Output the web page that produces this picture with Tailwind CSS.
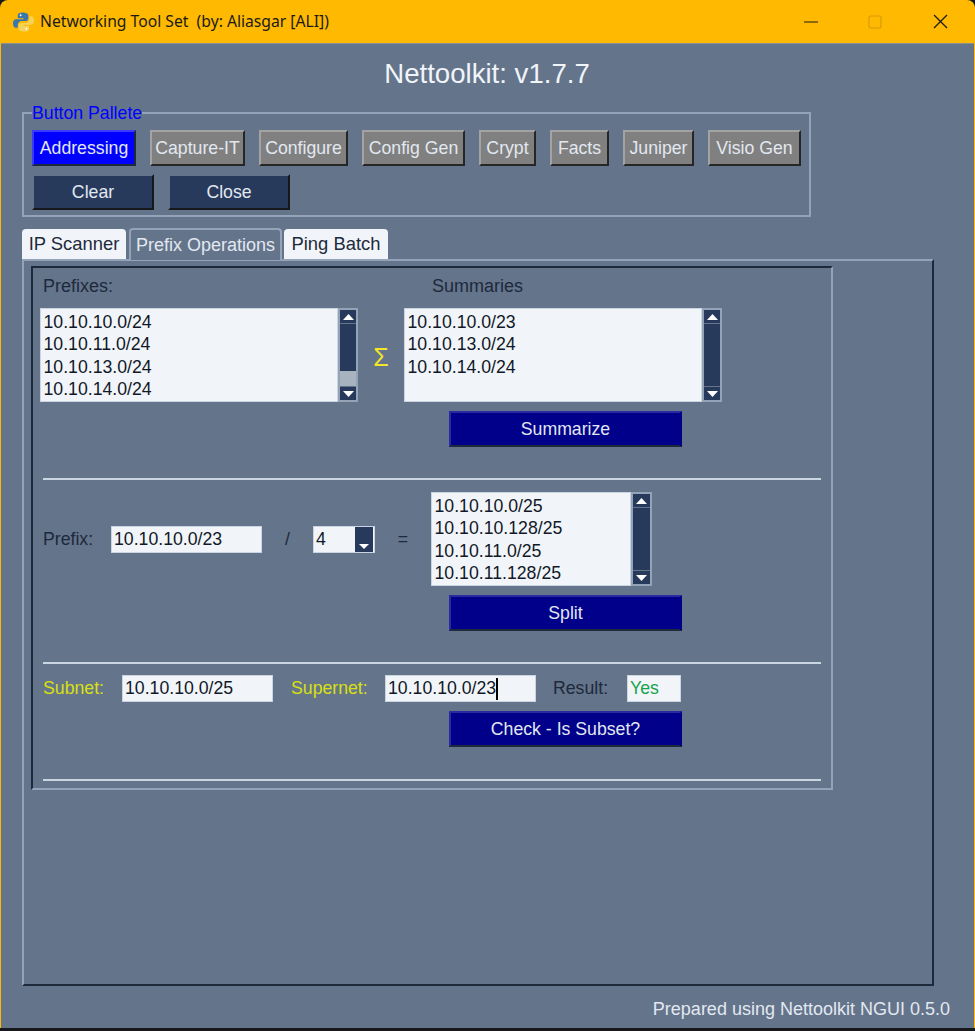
<!DOCTYPE html>
<html lang="en">
<head>
  <meta charset="UTF-8">
  <meta name="viewport" content="width=device-width, initial-scale=1.0">
  <title>Networking Tool Set</title>
  <script src="https://cdn.jsdelivr.net/npm/@tailwindcss/browser@4"></script>
</head>
<body class="bg-[#16181c] w-[975px] h-[1031px] overflow-hidden font-['Liberation_Sans',Arial,sans-serif] text-[17.7px] text-[#1e293b]">
  <div class="h-[1028px] flex flex-col rounded-t-[8px] bg-[#ffb900] overflow-hidden">

    <!-- Title bar -->
    <div class="h-[43px] shrink-0 flex items-center pl-[13px] text-[#1a1a1a]">
      <svg class="w-[21px] h-[22px]" viewBox="0 0 22 22">
        <path fill="#3a78ab" d="M10 1c-3 0-5 1-5 3v3h6v1H3C1 8 0 10 0 12.500S1 17 3 17h2v-3c0-2 2-4 4-4h4c1.500 0 3-1 3-3V4c0-2-3-3-6-3z"/>
        <path fill="#f5d25a" d="M12 21c3 0 5-1 5-3v-3h-6v-1h8c2 0 3-2 3-4.500S21 5 19 5h-2v3c0 2-2 4-4 4H9c-1.500 0-3 1-3 3v3c0 2 3 3 6 3z"/>
        <circle cx="8" cy="4" r="1" fill="#fff"/>
        <circle cx="14" cy="18" r="1" fill="#fff"/>
      </svg>
      <span class="ml-[6px] font-['Noto_Sans',sans-serif] text-[15.7px] whitespace-pre">Networking Tool Set  (by: Aliasgar [ALI])</span>
      <div class="ml-auto flex items-center">
        <svg class="w-[14px] h-[14px]" viewBox="0 0 14 14"><path d="M0 7h14" stroke="#1a1a1a" stroke-width="1.2"/></svg>
        <svg class="ml-[50px] w-[14px] h-[14px]" viewBox="0 0 14 14"><rect x="1" y="1" width="12" height="12" rx="2" fill="none" stroke="#d69c06" stroke-width="1.2"/></svg>
        <svg class="ml-[51px] mr-[27px] w-[15px] h-[15px]" viewBox="0 0 15 15"><path d="M1 1l13 13M14 1L1 14" stroke="#1a1a1a" stroke-width="1.3"/></svg>
      </div>
    </div>

    <!-- Window body -->
    <div class="flex-1 ml-[1px] mr-[1px] bg-[#64748b] pl-[21px] flex flex-col border-t border-[#8a8f8f]">
      <h1 class="h-[58px] shrink-0 pt-[14px] pr-[22px] text-center text-[27.6px] leading-[32px] text-[#f1f5f9]">Nettoolkit: v1.7.7</h1>

      <!-- Button palette -->
      <fieldset class="w-[788px] h-[115px] border-2 border-[#94a3b8] px-[8px]">
        <legend class="text-[17.7px] leading-[22px] text-[#0000ff]">Button Pallete</legend>
        <div class="mt-[6px] flex gap-[14px] h-[36px] text-[#e2e8f0]">
          <button class="w-[104px] bg-[#0000ff] border-2 border-t-[#3b3bff] border-l-[#3b3bff] border-r-[#1e293b] border-b-[#1e293b]">Addressing</button>
          <button class="w-[95px] bg-[#808080] border-2 border-t-[#a3a3a3] border-l-[#a3a3a3] border-r-[#262626] border-b-[#262626]">Capture-IT</button>
          <button class="w-[89px] bg-[#808080] border-2 border-t-[#a3a3a3] border-l-[#a3a3a3] border-r-[#262626] border-b-[#262626]">Configure</button>
          <button class="w-[103px] bg-[#808080] border-2 border-t-[#a3a3a3] border-l-[#a3a3a3] border-r-[#262626] border-b-[#262626]">Config Gen</button>
          <button class="w-[57px] bg-[#808080] border-2 border-t-[#a3a3a3] border-l-[#a3a3a3] border-r-[#262626] border-b-[#262626]">Crypt</button>
          <button class="w-[59px] bg-[#808080] border-2 border-t-[#a3a3a3] border-l-[#a3a3a3] border-r-[#262626] border-b-[#262626]">Facts</button>
          <button class="w-[71px] bg-[#808080] border-2 border-t-[#a3a3a3] border-l-[#a3a3a3] border-r-[#262626] border-b-[#262626]">Juniper</button>
          <button class="w-[93px] bg-[#808080] border-2 border-t-[#a3a3a3] border-l-[#a3a3a3] border-r-[#262626] border-b-[#262626]">Visio Gen</button>
        </div>
        <div class="mt-[8px] flex gap-[14px] h-[36px] text-[#e2e8f0]">
          <button class="w-[122px] bg-[#283a5b] border-2 border-t-[#64748b] border-l-[#64748b] border-r-[#16181c] border-b-[#16181c]">Clear</button>
          <button class="w-[122px] bg-[#283a5b] border-2 border-t-[#64748b] border-l-[#64748b] border-r-[#16181c] border-b-[#16181c]">Close</button>
        </div>
      </fieldset>

      <!-- Tabs -->
      <div class="mt-[11px] h-[32px] flex items-end relative z-10 -mb-[1px] text-[18.4px]">
        <div class="w-[104px] h-[31px] flex items-center justify-center bg-[#f1f5f9] rounded-t-[4px] border-b border-[#94a3b8]">IP Scanner</div>
        <div class="ml-[3px] w-[153px] h-[32px] flex items-center justify-center bg-[#64748b] text-[18px] text-[#e2e8f0] rounded-t-[4px] border-2 border-b-0 border-[#94a3b8]">Prefix Operations</div>
        <div class="ml-[2px] w-[104px] h-[31px] flex items-center justify-center bg-[#f1f5f9] rounded-t-[4px] border-b border-[#94a3b8]">Ping Batch</div>
      </div>

      <!-- Notebook pane -->
      <div class="w-[912px] h-[727px] border-2 border-t-[#94a3b8] border-l-[#94a3b8] border-r-[#1e293b] border-b-[#1e293b] pl-[7px] pt-[5px]">
        <div class="w-[802px] h-[524px] border-2 border-t-[#1e293b] border-l-[#1e293b] border-r-[#94a3b8] border-b-[#94a3b8]">

          <!-- Summaries -->
          <div class="mt-[7px] flex h-[22px] leading-[22px] text-[18px]">
            <span class="ml-[10px] w-[389px]">Prefixes:</span>
            <span>Summaries</span>
          </div>
          <div class="mt-[11px] ml-[7px] flex items-center">
            <div class="w-[298px] h-[94px] bg-[#f1f5f9] border border-[#cbd5e1] pl-[2.5px] pt-[2px] leading-[22.3px] text-[#111827]">
              <div>10.10.10.0/24</div>
              <div>10.10.11.0/24</div>
              <div>10.10.13.0/24</div>
              <div>10.10.14.0/24</div>
            </div>
            <div class="w-[20px] h-[94px] border-2 border-[#94a3b8] bg-[#a8b3c0] flex flex-col">
              <div class="h-[14px] bg-[#283a5b] border-b border-[#64748b] flex items-center justify-center">
                <svg class="w-[11px] h-[6px]" viewBox="0 0 11 6"><path fill="#fff" d="M5.500 0L11 6H0z"/></svg>
              </div>
              <div class="h-[47px] bg-[#283a5b]"></div>
              <div class="flex-1"></div>
              <div class="h-[14px] bg-[#283a5b] border-t border-[#64748b] flex items-center justify-center">
                <svg class="w-[11px] h-[6px]" viewBox="0 0 11 6"><path fill="#fff" d="M0 0h11L5.500 6z"/></svg>
              </div>
            </div>
            <span class="w-[46px] pt-[4px] text-center text-[#f4e628] text-[25px] leading-[30px]">Σ</span>
            <div class="w-[298px] h-[94px] bg-[#f1f5f9] border border-[#cbd5e1] pl-[2.5px] pt-[2px] leading-[22.3px] text-[#111827]">
              <div>10.10.10.0/23</div>
              <div>10.10.13.0/24</div>
              <div>10.10.14.0/24</div>
            </div>
            <div class="w-[20px] h-[94px] border-2 border-[#94a3b8] bg-[#283a5b] flex flex-col">
              <div class="h-[14px] border-b border-[#64748b] flex items-center justify-center">
                <svg class="w-[11px] h-[6px]" viewBox="0 0 11 6"><path fill="#fff" d="M5.500 0L11 6H0z"/></svg>
              </div>
              <div class="flex-1"></div>
              <div class="h-[14px] border-t border-[#64748b] flex items-center justify-center">
                <svg class="w-[11px] h-[6px]" viewBox="0 0 11 6"><path fill="#fff" d="M0 0h11L5.500 6z"/></svg>
              </div>
            </div>
          </div>
          <button class="block mt-[9px] ml-[416px] w-[233px] h-[36px] bg-[#00008b] text-[#e2e8f0] border-2 border-t-[#2a2aa0] border-l-[#2a2aa0] border-r-[#00008b] border-b-[#1e293b]">Summarize</button>

          <div class="mt-[31px] ml-[10px] w-[778px] h-[2px] bg-[#cbd5e1]"></div>

          <!-- Split -->
          <div class="mt-[12px] flex items-center h-[94px]">
            <span class="ml-[10px] w-[68px]">Prefix:</span>
            <div class="w-[151px] h-[27px] bg-[#f1f5f9] border border-[#cbd5e1] pl-[2px] leading-[25px] text-[#111827]">10.10.10.0/23</div>
            <span class="w-[51px] text-center">/</span>
            <div class="w-[62px] h-[27px] bg-[#f1f5f9] border border-[#cbd5e1] pl-[2px] leading-[25px] text-[#111827] flex justify-between">
              <span>4</span>
              <div class="w-[18px] mr-[1px] bg-[#283a5b] flex items-end justify-center pb-[3px]">
                <svg class="w-[10px] h-[5px]" viewBox="0 0 10 5"><path fill="#fff" d="M0 0h10L5 5z"/></svg>
              </div>
            </div>
            <span class="w-[56px] text-center">=</span>
            <div class="w-[200px] h-[94px] bg-[#f1f5f9] border border-[#cbd5e1] pl-[2.5px] pt-[2px] leading-[22.3px] text-[#111827]">
              <div>10.10.10.0/25</div>
              <div>10.10.10.128/25</div>
              <div>10.10.11.0/25</div>
              <div>10.10.11.128/25</div>
            </div>
            <div class="w-[21px] h-[94px] border-2 border-[#94a3b8] bg-[#283a5b] flex flex-col">
              <div class="h-[14px] border-b border-[#64748b] flex items-center justify-center">
                <svg class="w-[11px] h-[6px]" viewBox="0 0 11 6"><path fill="#fff" d="M5.500 0L11 6H0z"/></svg>
              </div>
              <div class="flex-1"></div>
              <div class="h-[14px] border-t border-[#64748b] flex items-center justify-center">
                <svg class="w-[11px] h-[6px]" viewBox="0 0 11 6"><path fill="#fff" d="M0 0h11L5.500 6z"/></svg>
              </div>
            </div>
          </div>
          <button class="block mt-[9px] ml-[416px] w-[233px] h-[36px] bg-[#00008b] text-[#e2e8f0] border-2 border-t-[#2a2aa0] border-l-[#2a2aa0] border-r-[#00008b] border-b-[#1e293b]">Split</button>

          <div class="mt-[31px] ml-[10px] w-[778px] h-[2px] bg-[#cbd5e1]"></div>

          <!-- Subset check -->
          <div class="mt-[11px] flex items-center h-[27px]">
            <span class="ml-[10px] w-[79px] text-[#d9e00f]">Subnet:</span>
            <div class="w-[151px] h-[27px] bg-[#f1f5f9] border border-[#cbd5e1] pl-[2px] leading-[25px] text-[#111827]">10.10.10.0/25</div>
            <span class="w-[112px] pl-[18px] text-[#d9e00f]">Supernet:</span>
            <div class="w-[151px] h-[27px] bg-[#f1f5f9] border border-[#cbd5e1] pl-[2px] leading-[25px] text-[#111827] flex items-center">10.10.10.0/23<span class="w-[2px] h-[22px] bg-black"></span></div>
            <span class="w-[91px] pl-[17px]">Result:</span>
            <div class="w-[54px] h-[27px] bg-[#f1f5f9] border border-[#cbd5e1] pl-[2px] leading-[25px] text-[#16a34a]">Yes</div>
          </div>
          <button class="block mt-[9px] ml-[416px] w-[233px] h-[36px] bg-[#00008b] text-[#e2e8f0] border-2 border-t-[#2a2aa0] border-l-[#2a2aa0] border-r-[#00008b] border-b-[#1e293b]">Check - Is Subset?</button>

          <div class="mt-[32px] ml-[10px] w-[778px] h-[2px] bg-[#cbd5e1]"></div>
        </div>
      </div>

      <div class="mt-[12px] pr-[24px] text-right text-[18px] leading-[22px] text-[#e2e8f0]">Prepared using Nettoolkit NGUI 0.5.0</div>
    </div>
  </div>
</body>
</html>
